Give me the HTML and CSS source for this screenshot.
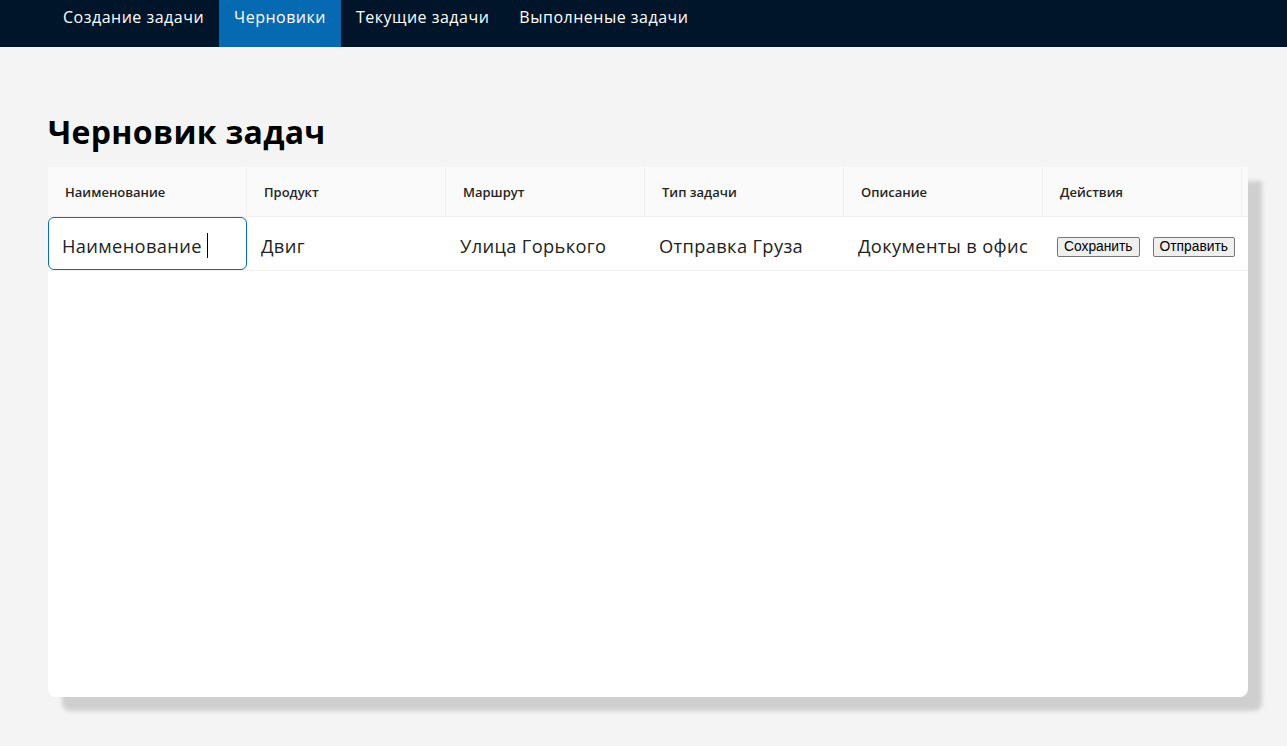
FILE: index.html
```html
<!DOCTYPE html>
<html lang="ru">
<head>
<meta charset="utf-8">
<title>Черновик задач</title>
<link rel="stylesheet" href="styles.css">
</head>
<body>
<nav class="topnav">
  <a class="nav-item">Создание задачи</a>
  <a class="nav-item active">Черновики</a>
  <a class="nav-item">Текущие задачи</a>
  <a class="nav-item">Выполненые задачи</a>
</nav>
<main class="page">
  <h1 class="title">Черновик задач</h1>
  <section class="card">
    <div class="table">
      <div class="th">Наименование</div>
      <div class="th">Продукт</div>
      <div class="th">Маршрут</div>
      <div class="th">Тип задачи</div>
      <div class="th">Описание</div>
      <div class="th">Действия</div>
      <div class="th th-fill"></div>

      <div class="td"><div class="field focused"><span class="val">Наименование</span><span class="caret"></span></div></div>
      <div class="td"><div class="field"><span class="val">Двиг</span></div></div>
      <div class="td"><div class="field"><span class="val">Улица Горького</span></div></div>
      <div class="td"><div class="field"><span class="val">Отправка Груза</span></div></div>
      <div class="td"><div class="field"><span class="val">Документы в офисе</span></div></div>
      <div class="td actions"><button class="btn">Сохранить</button><button class="btn">Отправить</button></div>
      <div class="td td-fill"></div>
    </div>
  </section>
</main>
</body>
</html>
```

FILE: styles.css
```css
* { box-sizing: border-box; }

html, body { min-height: 100%; }

body {
  margin: 0;
  background: #f4f4f4;
  font-family: "Open Sans", "Noto Sans", sans-serif;
  color: rgba(0, 0, 0, 0.88);
}

.topnav {
  display: flex;
  height: 47px;
  background: #001529;
  padding-left: 48px;
}

.nav-item {
  display: block;
  padding: 5px 15px 0;
  font-size: 16px;
  letter-spacing: 0.5px;
  line-height: 24px;
  color: #fff;
  height: 47px;
}

.nav-item.active {
  background: #066ab2;
}

.page {
  padding: 0 39px 49px 48px;
}

.title {
  margin: 63px 0 14px;
  font-size: 32px;
  line-height: 43px;
  font-weight: 700;
  letter-spacing: 0.3px;
  color: #000;
}

.card {
  height: 530px;
  background: #fff;
  border-radius: 0 0 8px 8px;
  box-shadow: 14px 14px 4px #cfcfcf;
  overflow: hidden;
}

.table {
  display: grid;
  grid-template-columns: repeat(6, 199px) 1fr;
}

.th {
  height: 50px;
  background: #fafafa;
  border-bottom: 1px solid #f0f0f0;
  border-right: 1px solid #f0f0f0;
  padding: 0 16px 0 17px;
  font-size: 13px;
  font-weight: 600;
  line-height: 50px;
  white-space: nowrap;
  color: #262626;
}

.th-fill { border-right: none; padding: 0; }

.td {
  height: 54px;
  border-bottom: 1px solid #f0f0f0;
  padding: 0;
}

.field {
  display: flex;
  align-items: center;
  height: 53px;
  border: 1px solid transparent;
  border-radius: 6px;
  padding: 3px 13px 0;
  font-size: 18.3px;
  letter-spacing: 0.35px;
  white-space: nowrap;
  color: #222;
}

.val {
  flex: 0 1 auto;
  min-width: 0;
  overflow: hidden;
}

.field.focused {
  border-color: #0b6cb4;
}

.caret {
  display: inline-block;
  flex: none;
  width: 1px;
  height: 25px;
  background: #000;
  margin-left: 5px;
}

.actions {
  display: flex;
  align-items: center;
  gap: 13px;
  padding: 7px 0 0 14px;
}

.btn {
  font-family: "Liberation Sans", Arial, sans-serif;
  font-size: 13.8px;
  height: 20px;
  padding: 0 6px;
  background: #efefef;
  border: 1px solid #767676;
  border-radius: 2px;
  color: #000;
  line-height: 18px;
}
```
